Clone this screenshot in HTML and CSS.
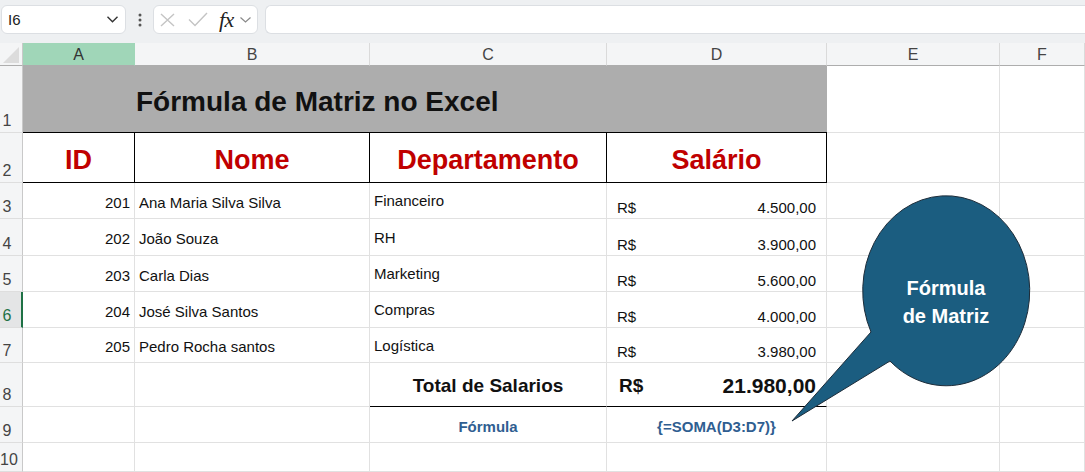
FILE: index.html
```html
<!DOCTYPE html>
<html lang="pt-BR">
<head>
<meta charset="utf-8">
<title>Fórmula de Matriz no Excel</title>
<link rel="stylesheet" href="styles.css">
</head>
<body>
<div class="toolbar">
  <div class="namebox">
    <span>I6</span>
    <svg class="chev" width="11" height="7" viewBox="0 0 11 7"><polyline points="0.5,0.8 5.5,5.8 10.5,0.8" fill="none" stroke="#333" stroke-width="1.4"/></svg>
  </div>
  <div class="dots">
    <svg width="4" height="14" viewBox="0 0 4 14"><circle cx="2" cy="2" r="1.5" fill="#555"/><circle cx="2" cy="7" r="1.5" fill="#555"/><circle cx="2" cy="12" r="1.5" fill="#555"/></svg>
  </div>
  <div class="fxgroup">
    <svg class="ico-x" width="15" height="14" viewBox="0 0 15 14"><path d="M1 1 L14 13 M14 1 L1 13" stroke="#c4c4c4" stroke-width="1.4" fill="none"/></svg>
    <svg class="ico-ok" width="20" height="15" viewBox="0 0 20 15"><polyline points="1,7.5 7,13.5 19,1" fill="none" stroke="#c4c4c4" stroke-width="1.4"/></svg>
    <span class="fx">fx</span>
    <svg class="chev-s" width="11" height="6" viewBox="0 0 11 6"><polyline points="0.5,0.5 5.5,5 10.5,0.5" fill="none" stroke="#8a8a8a" stroke-width="1.2"/></svg>
  </div>
  <div class="formulabar"></div>
</div>

<div class="sheet">
  <!-- column headers -->
  <div class="ch corner"><span class="tri"></span></div>
  <div class="ch sel">A</div>
  <div class="ch">B</div>
  <div class="ch">C</div>
  <div class="ch">D</div>
  <div class="ch">E</div>
  <div class="ch">F</div>

  <!-- row 1 -->
  <div class="rh"><span>1</span></div>
  <div class="c title">Fórmula de Matriz no Excel</div>
  <div class="c"></div>
  <div class="c"></div>

  <!-- row 2 -->
  <div class="rh"><span>2</span></div>
  <div class="c hd">ID</div>
  <div class="c hd">Nome</div>
  <div class="c hd">Departamento</div>
  <div class="c hd">Salário</div>
  <div class="c"></div>
  <div class="c"></div>

  <!-- row 3 -->
  <div class="rh"><span>3</span></div>
  <div class="c num">201</div>
  <div class="c txt">Ana Maria Silva Silva</div>
  <div class="c txt dep">Financeiro</div>
  <div class="c cur"><span>R$</span><span>4.500,00</span></div>
  <div class="c"></div>
  <div class="c"></div>

  <!-- row 4 -->
  <div class="rh"><span>4</span></div>
  <div class="c num">202</div>
  <div class="c txt">João Souza</div>
  <div class="c txt dep">RH</div>
  <div class="c cur"><span>R$</span><span>3.900,00</span></div>
  <div class="c"></div>
  <div class="c"></div>

  <!-- row 5 -->
  <div class="rh"><span>5</span></div>
  <div class="c num">203</div>
  <div class="c txt">Carla Dias</div>
  <div class="c txt dep">Marketing</div>
  <div class="c cur"><span>R$</span><span>5.600,00</span></div>
  <div class="c"></div>
  <div class="c"></div>

  <!-- row 6 -->
  <div class="rh sel"><span>6</span></div>
  <div class="c num">204</div>
  <div class="c txt">José Silva Santos</div>
  <div class="c txt dep">Compras</div>
  <div class="c cur"><span>R$</span><span>4.000,00</span></div>
  <div class="c"></div>
  <div class="c"></div>

  <!-- row 7 -->
  <div class="rh"><span>7</span></div>
  <div class="c num">205</div>
  <div class="c txt">Pedro Rocha santos</div>
  <div class="c txt dep">Logística</div>
  <div class="c cur"><span>R$</span><span>3.980,00</span></div>
  <div class="c"></div>
  <div class="c"></div>

  <!-- row 8 -->
  <div class="rh"><span>8</span></div>
  <div class="c"></div>
  <div class="c"></div>
  <div class="c total">Total de Salarios</div>
  <div class="c total-val"><span class="rs">R$</span><span>21.980,00</span></div>
  <div class="c"></div>
  <div class="c"></div>

  <!-- row 9 -->
  <div class="rh"><span>9</span></div>
  <div class="c"></div>
  <div class="c"></div>
  <div class="c blue">Fórmula</div>
  <div class="c blue">{=SOMA(D3:D7)}</div>
  <div class="c"></div>
  <div class="c"></div>

  <!-- row 10 -->
  <div class="rh"><span>10</span></div>
  <div class="c"></div>
  <div class="c"></div>
  <div class="c"></div>
  <div class="c"></div>
  <div class="c"></div>
  <div class="c"></div>
</div>

<svg class="callout" width="1085" height="472" viewBox="0 0 1085 472">
  <path d="M871 332 L792 421 L890 361 A83.5 95 0 1 0 871 332 Z" fill="#1b5d80" stroke="#1d2c39" stroke-width="1"/>
  <text x="946" y="295" class="callout-text">Fórmula</text>
  <text x="946" y="323" class="callout-text">de Matriz</text>
</svg>
</body>
</html>
```

FILE: styles.css
```css
* { box-sizing: border-box; }

html, body {
  margin: 0;
  padding: 0;
}

body {
  width: 1085px;
  height: 472px;
  overflow: hidden;
  position: relative;
  background: #ffffff;
  font-family: "Liberation Sans", Arial, sans-serif;
  color: #111;
}

/* ---------- toolbar ---------- */
.toolbar {
  height: 43px;
  background: #eef0f2;
  display: flex;
  align-items: flex-start;
  padding-top: 5px;
  padding-left: 1px;
}

.namebox {
  width: 125px;
  height: 29px;
  background: #fff;
  border: 1px solid #dcdfe3;
  border-radius: 6px;
  display: flex;
  align-items: center;
  justify-content: space-between;
  padding: 0 7px 0 6px;
  font-size: 15px;
  color: #222;
}

.dots {
  width: 27px;
  height: 29px;
  display: flex;
  align-items: center;
  justify-content: center;
}

.fxgroup {
  width: 105px;
  height: 29px;
  background: #fff;
  border: 1px solid #dcdfe3;
  border-radius: 6px;
  display: flex;
  align-items: center;
  padding-left: 6px;
}

.ico-ok { margin-left: 13px; }

.fx {
  margin-left: 11px;
  font-family: "Liberation Serif", "Times New Roman", serif;
  font-style: italic;
  font-size: 22px;
  color: #222;
  line-height: 20px;
  letter-spacing: -0.5px;
}

.chev-s { margin-left: 6px; }

.formulabar {
  margin-left: 7px;
  flex: 1;
  height: 29px;
  background: #fff;
  border: 1px solid #dcdfe3;
  border-right: none;
  border-radius: 6px 0 0 6px;
}

/* ---------- sheet grid ---------- */
.sheet {
  display: grid;
  grid-template-columns: 23px 112px 235px 237px 220px 173px 85px;
  grid-template-rows: 23px 67px 50px 36px 37px 36px 36px 35px 44px 36px 29px;
}

.ch {
  background: #f4f5f6;
  border-right: 1px solid #dadada;
  border-bottom: 1px solid #adadad;
  display: flex;
  align-items: center;
  justify-content: center;
  font-size: 16px;
  color: #444;
  padding-top: 1px;
}

.ch.sel {
  background: #a0d6b8;
  color: #333;
  border-right-color: #a0d6b8;
}

.corner {
  position: relative;
  border-right-color: #c9c9c9;
}

.tri {
  position: absolute;
  right: 3px;
  bottom: 2px;
  width: 0;
  height: 0;
  border-left: 16px solid transparent;
  border-bottom: 16px solid #dcdcdc;
}

.rh {
  background: #f4f5f6;
  border-right: 1px solid #c9c9c9;
  border-bottom: 1px solid #dedede;
  display: flex;
  align-items: flex-end;
  font-size: 16px;
  line-height: 16px;
  color: #444;
  padding-bottom: 3px;
}

.rh span {
  display: block;
  width: 14px;
  text-align: center;
  white-space: nowrap;
}

.rh.sel {
  background: #e4e5e6;
  color: #1e7145;
  border-right: 2px solid #1e7145;
}

.c {
  border-right: 1px solid #e1e1e1;
  border-bottom: 1px solid #e1e1e1;
  display: flex;
  align-items: center;
  font-size: 15px;
  line-height: 18px;
  color: #111;
  white-space: nowrap;
}

.title {
  grid-column: span 4;
  background: #adadad;
  border-right: none;
  border-bottom: 1px solid #000;
  font-size: 28px;
  line-height: 34px;
  font-weight: bold;
  color: #111;
  padding-left: 113px;
  padding-top: 5px;
}

.hd {
  border-right: 1px solid #000;
  border-bottom: 1px solid #000;
  justify-content: center;
  font-size: 27px;
  line-height: 32px;
  font-weight: bold;
  color: #c00000;
  padding-top: 5px;
}

.num {
  justify-content: flex-end;
  padding-right: 4px;
  padding-top: 4px;
}

.txt {
  padding-left: 4px;
  padding-top: 4px;
}

.txt.dep {
  padding-top: 1px;
}

.cur {
  align-items: flex-end;
  justify-content: space-between;
  padding: 0 10px 1px 10px;
}

.total {
  justify-content: center;
  font-size: 19px;
  line-height: 22px;
  font-weight: bold;
  border-bottom: 1px solid #000;
  padding-top: 3px;
}

.total-val {
  justify-content: space-between;
  padding: 3px 10px 0 12px;
  font-weight: bold;
  font-size: 21px;
  line-height: 24px;
  border-bottom: 1px solid #000;
}

.total-val .rs {
  font-size: 19px;
}

.blue {
  justify-content: center;
  font-size: 15px;
  font-weight: bold;
  color: #2f5e91;
  padding-top: 4px;
}

/* ---------- callout ---------- */
.callout {
  position: absolute;
  left: 0;
  top: 0;
  pointer-events: none;
}

.callout-text {
  font-family: "Liberation Sans", Arial, sans-serif;
  font-weight: bold;
  font-size: 20px;
  fill: #ffffff;
  text-anchor: middle;
}
```
